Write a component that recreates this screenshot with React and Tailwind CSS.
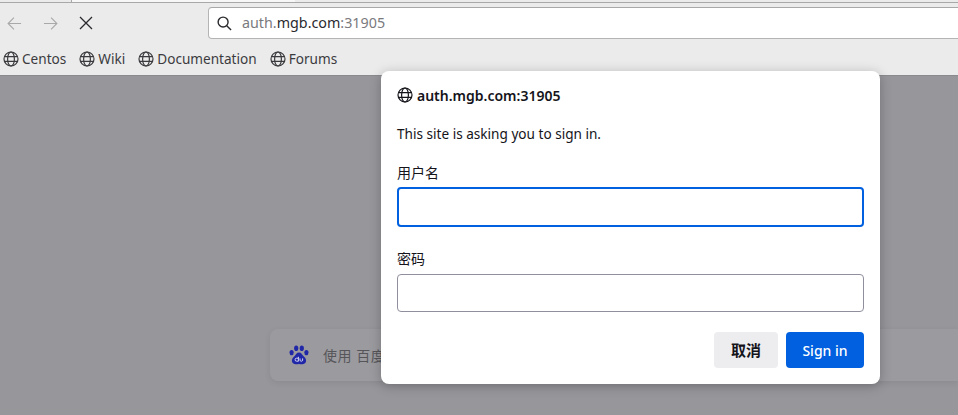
const uiFont = { fontFamily: '"Noto Sans", "Noto Sans CJK SC", sans-serif' };

function GlobeIcon({ className = 'w-4 h-4' }) {
  return (
    <svg viewBox="0 0 16 16" className={className} fill="none" stroke="currentColor" strokeWidth="1.2">
      <circle cx="8" cy="8" r="7" />
      <ellipse cx="8" cy="8" rx="3.4" ry="7" />
      <path d="M1.4 5.6h13.2M1.4 10.4h13.2" />
    </svg>
  );
}

function BaiduIcon() {
  return (
    <svg viewBox="0 0 20 20" className="w-[20px] h-[20px] text-[#2128a8]" fill="currentColor">
      <ellipse cx="2.6" cy="7.6" rx="2.1" ry="2.7" />
      <ellipse cx="7.2" cy="3.2" rx="2.1" ry="2.8" />
      <ellipse cx="12.8" cy="3.2" rx="2.1" ry="2.8" />
      <ellipse cx="17.4" cy="7.6" rx="2.1" ry="2.7" />
      <path d="M10 7.6c-2.4 0-3 2.2-4.6 3.6C4 12.4 2.4 14 3 16.6c.5 2 2.3 2.9 4.2 2.7 1-.1 1.9-.4 2.8-.4s1.8.3 2.8.4c1.9.2 3.7-.7 4.2-2.7.6-2.6-1-4.2-2.4-5.4C13 9.8 12.4 7.6 10 7.6z" />
      <path d="M9.4 11.8v4.4H7.6a1.5 1.5 0 1 1 0-3h1.8M11 13.4v1.8c0 1.4 2.6 1.4 2.6 0v-1.8" fill="none" stroke="#d4d4f0" strokeWidth="1" />
    </svg>
  );
}

function Bookmark({ label }) {
  return (
    <div className="flex items-center gap-[3px] text-[#3b3b3f]">
      <GlobeIcon className="w-[16px] h-[16px]" />
      <span className="text-[13.6px]">{label}</span>
    </div>
  );
}

export default function App() {
  return (
    <div className="relative w-[958px] h-[415px] overflow-hidden flex flex-col bg-[#ebebeb]" style={uiFont}>
      {/* Tab strip remnant */}
      <div className="h-[3px] flex-shrink-0 flex bg-[#ebebeb] border-b border-[#a8a8a8]">
        <div className="w-[72px] border-r border-[#a8a8a8]" />
        <div className="w-[223px] bg-[#f7f7f7]" />
      </div>

      {/* Toolbar */}
      <div className="h-[40px] flex-shrink-0 flex items-center">
        <div className="w-[208px] flex items-center pl-[7px] gap-[21px] flex-shrink-0">
          <svg viewBox="0 0 16 16" className="w-[15px] h-[15px] text-[#a9a9ab]" fill="none" stroke="currentColor" strokeWidth="1.2">
            <path d="M15 8H1.2M7.4 1.8 1.2 8l6.2 6.2" />
          </svg>
          <svg viewBox="0 0 16 16" className="w-[15px] h-[15px] text-[#a9a9ab]" fill="none" stroke="currentColor" strokeWidth="1.2">
            <path d="M1 8h13.8M8.6 1.8 14.8 8l-6.2 6.2" />
          </svg>
          <svg viewBox="0 0 14 14" className="w-[14px] h-[14px] text-[#2a2a2e]" fill="none" stroke="currentColor" strokeWidth="1.3">
            <path d="M1 1l12 12M13 1 1 13" />
          </svg>
        </div>
        <div className="flex-1 h-[32px] -mr-[10px] flex items-center gap-[10px] pl-[8px] bg-white border border-[#b4b4b4] rounded-l-[4px] border-t-[#a8a8a8]">
          <svg viewBox="0 0 16 16" className="w-[15px] h-[15px] text-[#2a2a2e]" fill="none" stroke="currentColor" strokeWidth="1.5">
            <circle cx="6.5" cy="6.5" r="5.3" />
            <path d="M10.4 10.4 15 15" />
          </svg>
          <div className="text-[14.3px] text-[#7a7a7e]">
            auth.<span className="text-[#2a2a2e]">mgb.com</span>:31905
          </div>
        </div>
      </div>

      {/* Bookmarks */}
      <div className="h-[32px] flex-shrink-0 flex items-center gap-[13px] pl-[3px]">
        <Bookmark label="Centos" />
        <Bookmark label="Wiki" />
        <Bookmark label="Documentation" />
        <Bookmark label="Forums" />
      </div>

      {/* Page behind the dialog */}
      <div className="flex-1 bg-[#97969b] border-t border-[#8a898e] pl-[270px] pt-[253px]">
        <div className="h-[52px] flex items-center gap-[14px] pl-[19px] bg-[#9b9a9e] rounded-l-[8px] shadow-[0_2px_6px_rgba(0,0,0,0.08)]">
          <BaiduIcon />
          <span className="text-[14px] text-[#56565a] tracking-[0.5px]">使用 百度</span>
        </div>
      </div>

      {/* Auth dialog */}
      <div className="absolute left-[381px] top-[71px] w-[499px] h-[313px] bg-white rounded-[8px] shadow-[0_2px_12px_rgba(0,0,0,0.25)] px-[16px] flex flex-col text-[#15141a]">
        <div className="flex items-center gap-[4px] mt-[15px] h-[18px]">
          <GlobeIcon className="w-[16px] h-[16px]" />
          <span className="text-[14px] font-semibold">auth.mgb.com:31905</span>
        </div>
        <p className="text-[13.6px] mt-[21px] leading-[18px]">This site is asking you to sign in.</p>
        <label className="text-[14px] mt-[20px] leading-[20px]">用户名</label>
        <input className="mt-[4px] h-[40px] rounded-[4px] border-2 border-[#0060df] outline-none" />
        <label className="text-[14px] mt-[22px] leading-[20px]">密码</label>
        <input className="mt-[5px] h-[38px] rounded-[4px] border border-[#8f8f9d] outline-none" />
        <div className="flex justify-end gap-[8px] mt-[20px]">
          <button className="w-[64px] h-[36px] rounded-[4px] bg-[#ededf0] text-[15px] font-semibold">取消</button>
          <button className="w-[78px] h-[36px] rounded-[4px] bg-[#0060df] text-white text-[14px] font-medium">Sign in</button>
        </div>
      </div>
    </div>
  );
}
